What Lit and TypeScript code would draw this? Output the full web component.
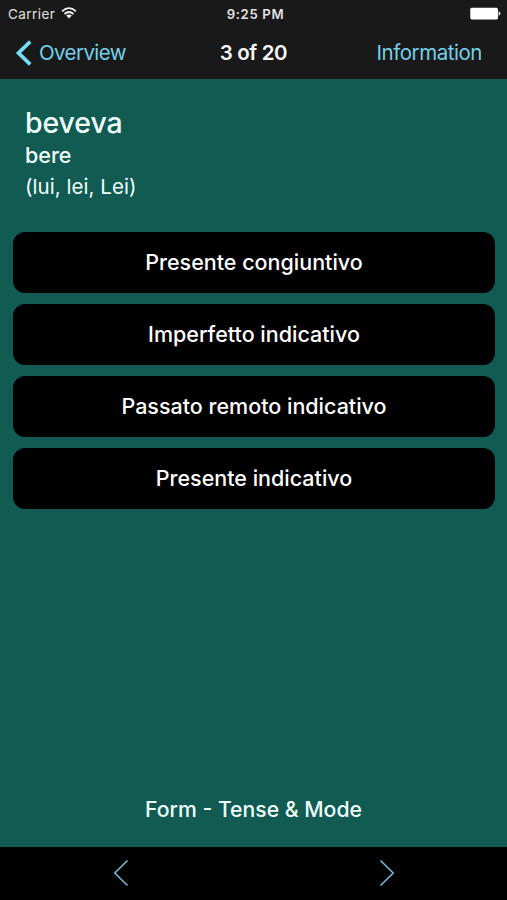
import { LitElement, html, css } from "lit";
import { customElement } from "lit/decorators.js";

@customElement("app-root")
class AppRoot extends LitElement {
  static styles = css`
    :host {
      display: flex;
      flex-direction: column;
      height: 900px;
      background: #115b53;
      color: #fff;
      font-family: Inter, Roboto, sans-serif;
      white-space: nowrap;
    }
    svg { display: block; fill: none; }
    header { background: #191919; height: 79px; flex: none; }
    .row { display: grid; grid-template-columns: 1fr auto 1fr; align-items: center; }
    .status { height: 27px; padding: 0 6px 0 8px; font-size: 13.5px; color: #e2e2e2; }
    .carrier { display: flex; align-items: center; gap: 6px; letter-spacing: 0.45px; }
    .carrier svg { margin-top: -2px; }
    .time { font-weight: 600; font-size: 13.2px; letter-spacing: 0.65px; margin-left: 2px; }
    .battery { justify-self: end; }
    .nav { height: 51px; padding: 0 25px 0 15px; font-size: 20.5px; color: #75d0ea; }
    .back { display: flex; align-items: center; gap: 6px; letter-spacing: -0.6px; }
    .count { color: #f6f6f6; font-weight: 600; letter-spacing: -0.4px; margin-left: 10px; }
    .info { justify-self: end; letter-spacing: -0.45px; }
    main { flex: 1; display: flex; flex-direction: column; padding: 28px 12px 0; }
    .question { padding-left: 13px; height: 125px; color: #effffb; }
    .form { font-size: 28.5px; line-height: 31px; font-weight: 550; letter-spacing: -0.1px; }
    .verb { font-size: 21.5px; line-height: 34px; font-weight: 550; }
    .person { font-size: 20.5px; line-height: 30px; letter-spacing: 0.05px; }
    .answers { display: flex; flex-direction: column; gap: 11px; }
    .answer {
      font: inherit; color: #fff; background: #000; border: 0; padding: 0 0 2px;
      height: 61px; border-radius: 12px; margin-left: 1px;
      font-size: 21.5px; font-weight: 550;
    }
    .hint { margin-top: auto; height: 76px; line-height: 76px; text-align: center; font-size: 21.2px; font-weight: 500; color: #effffb; }
    footer { height: 53px; flex: none; background: #000; display: flex; justify-content: space-between; align-items: center; padding: 0 112px 2px 113px; box-sizing: border-box; }
  `;

  render() {
    return html`
      <header>
        <div class="row status">
          <span class="carrier"><span>Carrier</span>
            <svg width="16" height="12" viewBox="0 0 16 12" stroke="#f2f2f2" stroke-width="1.8">
              <path d="M1 4.3Q8-2.1 15 4.3M3.5 7Q8 3 12.5 7" />
              <path d="M5.2 8.6Q8 6.2 10.8 8.6L8 11.6Z" fill="#f2f2f2" stroke="none" />
            </svg>
          </span>
          <span class="time">9:25 PM</span>
          <svg class="battery" width="31" height="13" viewBox="0 0 31 13">
            <rect x="0.3" y="0.7" width="27.7" height="11.7" rx="1.6" fill="#fff" />
            <path d="M28.6 4.2Q30.5 4.6 30.5 6.5T28.6 8.8Z" fill="#ddd" />
          </svg>
        </div>
        <div class="row nav">
          <span class="back">
            <svg width="18" height="28" viewBox="0 0 18 28" stroke="#75dcf5" stroke-width="3.7">
              <path d="M15.2 2.6L3.5 14L15.2 25.4" />
            </svg><span>Overview</span>
          </span>
          <span class="count">3 of 20</span>
          <span class="info">Information</span>
        </div>
      </header>
      <main>
        <div class="question">
          <div class="form">beveva</div>
          <div class="verb">bere</div>
          <div class="person">(lui, lei, Lei)</div>
        </div>
        <div class="answers">
          ${["Presente congiuntivo", "Imperfetto indicativo", "Passato remoto indicativo", "Presente indicativo"].map(
            (label) => html`<button class="answer">${label}</button>`
          )}
        </div>
        <div class="hint">Form - Tense &amp; Mode</div>
      </main>
      <footer>
        <svg width="16" height="28" viewBox="0 0 16 28" stroke="#75bfe0" stroke-width="1.5"><path d="M14.5 1.5L1.8 14L14.5 26.5" /></svg>
        <svg width="16" height="28" viewBox="0 0 16 28" stroke="#75bfe0" stroke-width="1.5"><path d="M1.5 1.5L14.2 14L1.5 26.5" /></svg>
      </footer>
    `;
  }
}
